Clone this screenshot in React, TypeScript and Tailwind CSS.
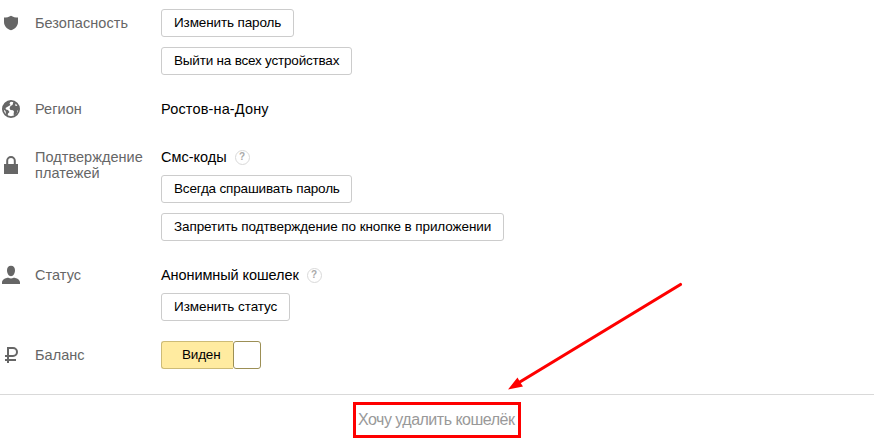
import type { ReactNode } from "react";
import { twMerge } from "tailwind-merge";

type RowProps = {
  icon: ReactNode;
  label: string;
  className?: string;
  children: ReactNode;
};

const Row = ({ icon, label, className, children }: RowProps) => (
  <div className={twMerge("flex items-start", className)}>
    <div className="w-[35px] shrink-0">{icon}</div>
    <div className="w-[126px] shrink-0 text-[14.5px] leading-4 tracking-[0.04px] text-[#666]">
      {label}
    </div>
    <div className="flex flex-col items-start gap-2.5">{children}</div>
  </div>
);

const Button = ({ text, className }: { text: string; className: string }) => (
  <button
    className={twMerge(
      "flex h-7 items-center whitespace-nowrap rounded-[3px] border border-[#ccc] bg-white pb-px pl-3 text-[13.5px] leading-4 text-black",
      className
    )}
  >
    {text}
  </button>
);

const Hint = () => (
  <span className="flex size-[15px] items-center justify-center rounded-full border border-[#d9d9d9] text-[10px] leading-none font-bold text-[#aaa]">
    ?
  </span>
);

const ShieldIcon = () => (
  <svg width="20" height="16" viewBox="0 0 20 16" fill="#666">
    <path d="M11 .7C9 2 6.500 2.600 4 2.600V7c0 4 3 7 7 8.200 4-1.200 7-4.200 7-8.200V2.600c-2.500 0-5-.6-7-1.900z" />
  </svg>
);

const GlobeIcon = () => (
  <svg width="22" height="20" viewBox="0 0 22 20">
    <circle cx="11" cy="10" r="8.100" fill="none" stroke="#666" strokeWidth="1.800" />
    <path
      d="M3 8 5 4l4-2h2L9.500 4.500l1 1.500L8 7.500 5.500 9l.5 1.500 2 .5 1.500 2L8 14.500 7.500 17 6 15.500 5.500 12 3.500 10.500z"
      fill="#666"
    />
    <path
      d="M13.500 2.500 16 4l-1 2.500 2 .5 1.500-.5.5 3.500-1.500 1.500L17 14l-2 2.500-1.500-1 .5-3-1-1.300-2.500-.2-1-1.700L10.500 7l2-1z"
      fill="#666"
    />
  </svg>
);

const LockIcon = () => (
  <svg width="20" height="20" viewBox="0 0 20 20">
    <path d="M4 9h14v10H4z" fill="#666" />
    <path d="M7.200 9.500V5.800a3.800 3.800 0 0 1 7.600 0v3.700" fill="none" stroke="#666" strokeWidth="2" />
  </svg>
);

const UserIcon = () => (
  <svg width="22" height="20" viewBox="0 0 22 20" fill="#666">
    <path d="M11 .7c2.600 0 4 1.700 4 4.600 0 3.200-1.800 5.900-4 5.900S7 8.500 7 5.300C7 2.400 8.400.7 11 .7zM2 19v-1.500c0-2.600 3-4.600 6.500-4.700 1.500.9 3.500.9 5 0 3.500.1 6.500 2.100 6.500 4.700V19z" />
  </svg>
);

const RubleIcon = () => (
  <svg width="20" height="18" viewBox="0 0 20 18" fill="none" stroke="#666" strokeWidth="2">
    <path d="M8 16V1h5a4 4 0 0 1 0 8H5M5 13h11" />
  </svg>
);

export default function App() {
  return (
    <div className="relative h-[440px] w-[874px] overflow-hidden bg-white pt-[9px] font-['Liberation_Sans',sans-serif]">
      <Row icon={<ShieldIcon />} label="Безопасность" className="[&>*:nth-child(-n+2)]:pt-1.5">
        <Button text="Изменить пароль" className="w-[133px] tracking-[-0.13px]" />
        <Button text="Выйти на всех устройствах" className="w-[191px] tracking-[-0.2px]" />
      </Row>

      <Row icon={<div className="-mt-0.5"><GlobeIcon /></div>} label="Регион" className="mt-[26px] h-4">
        <span className="text-[14.5px] leading-4 tracking-[0.15px] text-black">Ростов-на-Дону</span>
      </Row>

      <Row icon={<div className="pt-[6px]"><LockIcon /></div>} label="Подтверждение платежей" className="mt-8">
        <div className="flex h-4 items-center gap-2">
          <span className="text-[14.5px] leading-4 text-black">Смс-коды</span>
          <Hint />
        </div>
        <Button text="Всегда спрашивать пароль" className="w-[191px] tracking-[-0.17px]" />
        <Button
          text="Запретить подтверждение по кнопке в приложении"
          className="w-[343px] tracking-[-0.09px]"
        />
      </Row>

      <Row icon={<div className="-mt-[2px]"><UserIcon /></div>} label="Статус" className="mt-[26px]">
        <div className="flex h-4 items-center gap-2">
          <span className="text-[14.5px] leading-4 tracking-[-0.08px] text-black">Анонимный кошелек</span>
          <Hint />
        </div>
        <Button text="Изменить статус" className="w-[129px] tracking-[-0.07px]" />
      </Row>

      <Row icon={<RubleIcon />} label="Баланс" className="mt-5 [&>*:nth-child(-n+2)]:pt-1.5">
        {/* Toggle */}
        <div className="flex h-7 w-[100px]">
          <span className="w-[72px] rounded-l-[3px] border border-r-0 border-[#cdbb76] bg-[#ffeba0] pl-5 text-[13.5px] leading-[25px] tracking-[-0.2px] text-black">
            Виден
          </span>
          <span className="flex-1 rounded-[3px] border border-[#9c8f55] bg-white" />
        </div>
      </Row>

      {/* Footer */}
      <div className="mt-[25px] flex border-t border-[#d9d9d9] pt-[7px] pl-[353px]">
        <div className="flex h-9 w-[168px] items-center border-[3px] border-[#fe0000] pl-0.5 text-[16px] tracking-[-0.5px] whitespace-nowrap text-[#999]">
          Хочу удалить кошелёк
        </div>
      </div>

      {/* Arrow over the page */}
      <svg className="absolute top-[270px] left-[490px]" width="210" height="130" viewBox="0 0 210 130">
        <path d="M190.500 14.500 29 112.500" stroke="#fe0000" strokeWidth="3.200" strokeLinecap="round" />
        <path d="M18 119.500 27.500 107.500 30 112l3 4.500z" fill="#fe0000" />
      </svg>
    </div>
  );
}
